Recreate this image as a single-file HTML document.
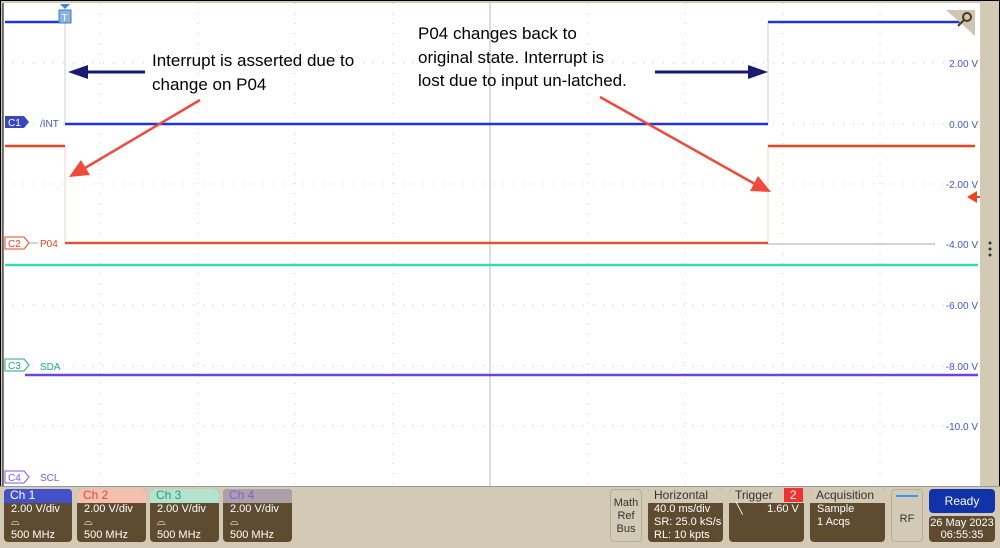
<!DOCTYPE html>
<html><head><meta charset="utf-8"><style>
body{margin:0;width:1000px;height:547px;overflow:hidden;background:#fff;font-family:"Liberation Sans",sans-serif}
.bar{position:absolute;left:0;top:486px;width:1000px;height:61px;background:#d3cab5;border-top:1px solid #999}
.b{position:absolute;background:#5e4b30;color:#fff;font-size:11px;border-radius:4px;line-height:13px;box-sizing:border-box}
.b .h{height:14px;border-radius:4px 4px 0 0;padding-left:6px;font-size:12px}
.b .t{padding-left:7px}
</style></head><body>
<svg width="1000" height="547" style="position:absolute;left:0;top:0" font-family="Liberation Sans, sans-serif">
<rect x="0" y="0" width="1000" height="547" fill="#d3cab5"/>
<rect x="3" y="3" width="977" height="484" fill="#fff"/>
<g stroke="#ccc" stroke-dasharray="1,9" stroke-width="1">
<line x1="100" y1="3" x2="100" y2="487"/><line x1="198" y1="3" x2="198" y2="487"/><line x1="295" y1="3" x2="295" y2="487"/><line x1="393" y1="3" x2="393" y2="487"/><line x1="588" y1="3" x2="588" y2="487"/><line x1="685" y1="3" x2="685" y2="487"/><line x1="783" y1="3" x2="783" y2="487"/><line x1="880" y1="3" x2="880" y2="487"/>
<line x1="3" y1="63" x2="980" y2="63"/><line x1="3" y1="124" x2="980" y2="124"/><line x1="3" y1="184" x2="980" y2="184"/><line x1="3" y1="305" x2="980" y2="305"/><line x1="3" y1="366" x2="980" y2="366"/><line x1="3" y1="426" x2="980" y2="426"/>
</g>
<line x1="490" y1="3" x2="490" y2="487" stroke="#bbb"/>
<line x1="65" y1="22" x2="65" y2="124" stroke="#ccd" />
<line x1="768" y1="22" x2="768" y2="124" stroke="#ccd"/>
<line x1="65" y1="146" x2="65" y2="243" stroke="#f2d0cc" />
<line x1="768" y1="146" x2="768" y2="243" stroke="#f2d0cc"/>
<g stroke-width="2.5" fill="none">
<line x1="5" y1="22" x2="65" y2="22" stroke="#2233dd"/>
<line x1="65" y1="124" x2="768" y2="124" stroke="#2233dd"/>
<line x1="768" y1="22" x2="975" y2="22" stroke="#2233dd"/>
<line x1="5" y1="146" x2="65" y2="146" stroke="#ee4422"/>
<line x1="65" y1="243" x2="768" y2="243" stroke="#d85535"/>
<line x1="768" y1="146" x2="975" y2="146" stroke="#ee4422"/>
<line x1="5" y1="265" x2="978" y2="265" stroke="#33ddaa"/>
<line x1="25" y1="375" x2="978" y2="375" stroke="#6a44e0"/>
</g>
<rect x="59" y="10" width="12" height="13" fill="#8ab4e0" stroke="#4a7ab0"/><text x="61.5" y="21" font-size="10" fill="#fff">T</text>
<polygon points="60,4 70,4 65,9" fill="#3a8ad8"/>
<line x1="145" y1="72" x2="85" y2="72" stroke="#1a1a6e" stroke-width="3"/><polygon points="68,72 88,65 88,79" fill="#1a1a6e"/>
<line x1="655" y1="72" x2="750" y2="72" stroke="#1a1a6e" stroke-width="3"/><polygon points="768,72 748,65 748,79" fill="#1a1a6e"/>
<line x1="200" y1="100" x2="85" y2="168" stroke="#f04b3a" stroke-width="2.5"/><polygon points="69,177 81,160 90,175" fill="#f04b3a"/>
<line x1="600" y1="97" x2="755" y2="184" stroke="#f04b3a" stroke-width="2.5"/><polygon points="771,192 750,191 758,176" fill="#f04b3a"/>
<g font-size="17" fill="#000">
<text x="152" y="66">Interrupt is asserted due to</text><text x="152" y="90">change on P04</text>
<text x="418" y="39">P04 changes back to</text><text x="418" y="63">original state. Interrupt is</text><text x="418" y="86">lost due to input un-latched.</text>
</g>
<g font-size="10" fill="#4455cc" text-anchor="end">
<text x="978" y="67">2.00 V</text><text x="978" y="128">0.00 V</text><text x="978" y="188">-2.00 V</text><text x="978" y="248">-4.00 V</text><text x="978" y="309">-6.00 V</text><text x="978" y="370">-8.00 V</text><text x="978" y="430">-10.0 V</text>
</g>
<line x1="768" y1="244" x2="935" y2="244" stroke="#aaa"/>
<polygon points="5,116 24,116 29,122 24,128 5,128" fill="#3a48c0"/><text x="8" y="126" font-size="10" fill="#fff">C1</text><text x="40" y="127" font-size="10" fill="#4455cc">/INT</text>
<polygon points="5,237 24,237 29,243 24,249 5,249" fill="#fff" stroke="#ee4422"/><text x="8" y="247" font-size="10" fill="#ee4422">C2</text><line x1="29" y1="243" x2="38" y2="243" stroke="#aaa"/><text x="40" y="247" font-size="10" fill="#ee4422">P04</text>
<polygon points="5,359 24,359 29,365 24,371 5,371" fill="#fff" stroke="#22aa88"/><text x="8" y="369" font-size="10" fill="#22aa88">C3</text><text x="40" y="370" font-size="10" fill="#22aa88">SDA</text>
<polygon points="5,471 24,471 29,477 24,483 5,483" fill="#fff" stroke="#8855ee"/><text x="8" y="481" font-size="10" fill="#8855ee">C4</text><text x="40" y="481" font-size="10" fill="#8855ee">SCL</text>
<polygon points="946,10 975,10 975,36" fill="#cfc6b2"/><circle cx="967" cy="17" r="4" fill="none" stroke="#4a3a20" stroke-width="2"/><line x1="964" y1="20" x2="958" y2="26" stroke="#4a3a20" stroke-width="2"/>
<polygon points="967,197 977,191 977,203" fill="#ee4422"/><line x1="975" y1="197" x2="980" y2="197" stroke="#ee4422" stroke-width="2"/>
<circle cx="990" cy="243" r="1.5" fill="#333"/><circle cx="990" cy="249" r="1.5" fill="#333"/><circle cx="990" cy="255" r="1.5" fill="#333"/>
<rect x="0.5" y="0.5" width="999" height="546" fill="none" stroke="#000"/>
<line x1="3" y1="3" x2="3" y2="487" stroke="#000"/>
</svg>
<div class="bar"></div>
<div class="b" style="left:4px;top:489px;width:68px;height:53px"><div class="h" style="background:#4451c8">Ch 1</div><div class="t">2.00 V/div<br>⌓<br>500 MHz</div></div>
<div class="b" style="left:77px;top:489px;width:69px;height:53px"><div class="h" style="background:#f5bfb0;color:#e04a30">Ch 2</div><div class="t">2.00 V/div<br>⌓<br>500 MHz</div></div>
<div class="b" style="left:150px;top:489px;width:69px;height:53px"><div class="h" style="background:#b3e3cf;color:#2a9a78">Ch 3</div><div class="t">2.00 V/div<br>⌓<br>500 MHz</div></div>
<div class="b" style="left:223px;top:489px;width:69px;height:53px"><div class="h" style="background:#aca0a8;color:#8855ee">Ch 4</div><div class="t">2.00 V/div<br>⌓<br>500 MHz</div></div>
<div class="b" style="left:610px;top:489px;width:32px;height:53px;background:#d3cab5;border:1px solid #b8ae98;color:#333;text-align:center;padding-top:7px">Math<br>Ref<br>Bus</div>
<div class="b" style="left:648px;top:489px;width:75px;height:53px"><div class="h" style="background:#d3cab5;color:#333">Horizontal</div><div class="t" style="padding-left:6px">40.0 ms/div<br>SR: 25.0 kS/s<br>RL: 10 kpts</div></div>
<div class="b" style="left:729px;top:489px;width:75px;height:53px"><div class="h" style="background:#d3cab5;color:#333">Trigger <span style="background:#e33;color:#fff;padding:0 6px;margin-left:8px">2</span></div><div class="t">╲ &nbsp;&nbsp;&nbsp;&nbsp;&nbsp;&nbsp;&nbsp;1.60 V</div></div>
<div class="b" style="left:810px;top:489px;width:75px;height:53px"><div class="h" style="background:#d3cab5;color:#333">Acquisition</div><div class="t">Sample<br>1 Acqs</div></div>
<div class="b" style="left:891px;top:489px;width:32px;height:53px;background:#d3cab5;border:1px solid #b8ae98;color:#333;text-align:center"><div style="height:2px;background:#39f;margin:5px 4px 0"></div><div style="margin-top:16px">RF</div></div>
<div class="b" style="left:929px;top:489px;width:66px;height:24px;background:#1133aa;text-align:center;line-height:24px;font-size:12px">Ready</div>
<div class="b" style="left:929px;top:516px;width:66px;height:26px;text-align:center;font-size:11px;line-height:12px;padding-top:1px">26 May 2023<br>06:55:35</div>
</body></html>
